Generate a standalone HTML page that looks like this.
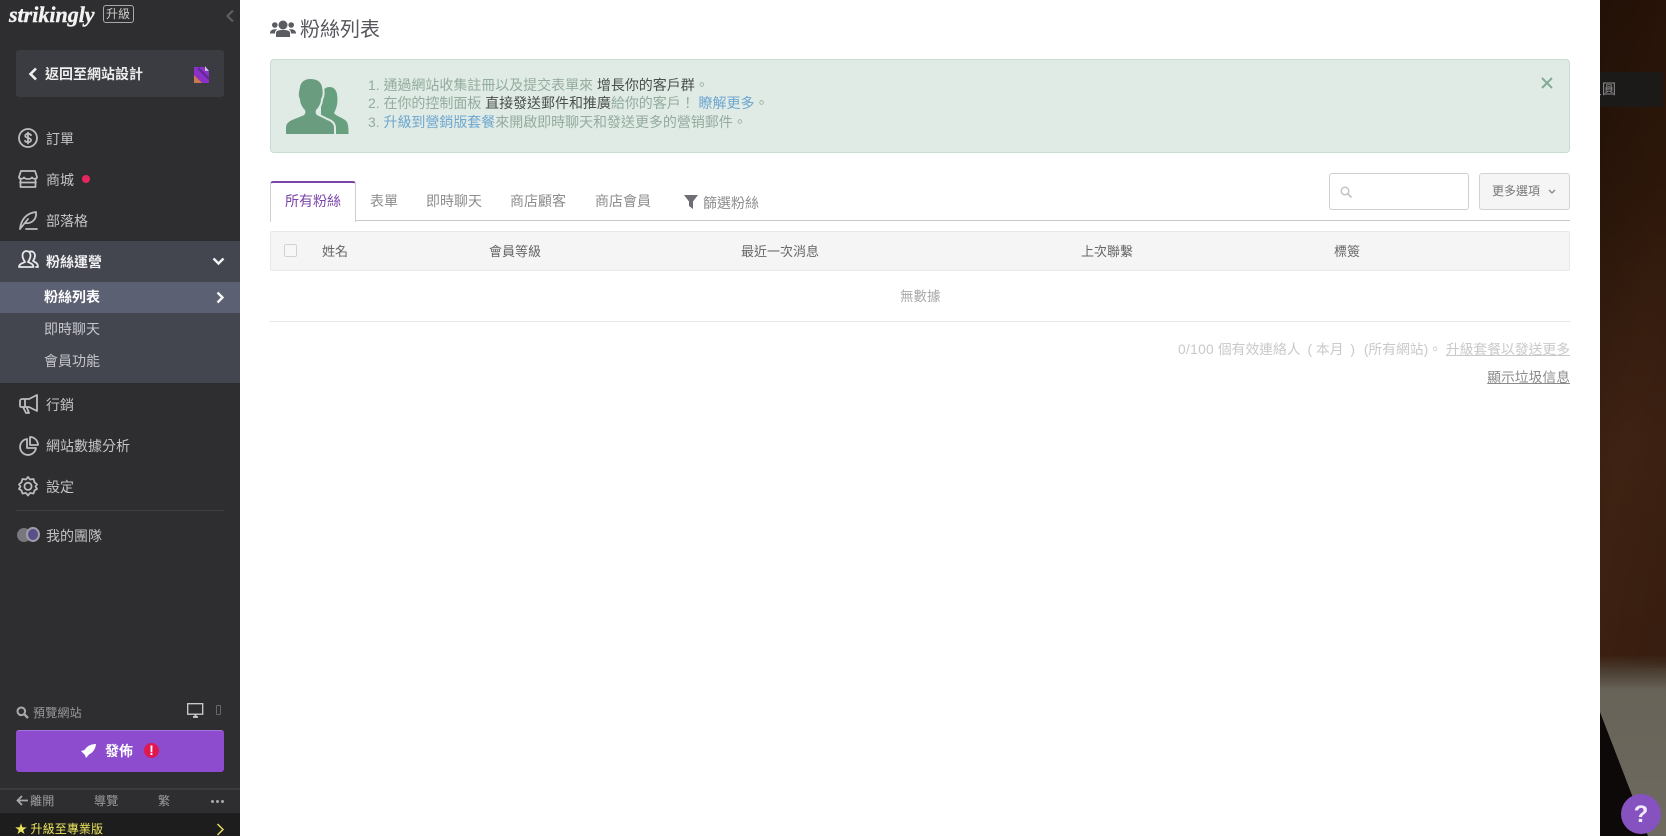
<!DOCTYPE html>
<html lang="zh-Hant"><head><meta charset="utf-8"><title>粉絲列表</title>
<style>
html,body{margin:0;padding:0;width:1666px;height:836px;overflow:hidden;background:#fff;font-family:"Liberation Sans","Noto Sans CJK TC",sans-serif}
*{box-sizing:border-box}
.a{position:absolute}
.t{position:absolute;white-space:nowrap;line-height:20px;font-size:14px}
svg{position:absolute;overflow:visible}
.n{color:#c4c4c8;left:46px}
.i{fill:none;stroke:#bdbdc1;stroke-width:1.8;stroke-linecap:round;stroke-linejoin:round}
.m{color:#8d8d8d}
.h{color:#666;font-size:13px;top:242px}
</style></head><body>

<!-- right background -->
<div class="a" style="left:1600px;top:0;width:66px;height:836px;overflow:hidden;background:linear-gradient(180deg,#2a1408 0,#2d170a 180px,#3e2213 440px,#3c2011 655px,#4c4034 672px,#686358 690px,#6e6a5f 836px)">
  <div class="a" style="left:0;top:0;width:66px;height:668px;background:linear-gradient(100deg,rgba(0,0,0,.18) 0,rgba(0,0,0,0) 55%,rgba(0,0,0,.08) 100%)"></div>
  <svg style="left:0;top:0" width="66" height="836"><path d="M0 712L30 790L48 836H0Z" fill="#0c0908"/></svg>
  <div class="a" style="left:0;top:72px;width:63px;height:35px;background:#1b1a19"></div>
  <div class="t" style="left:-12px;top:79px;font-size:14px;color:#8f8f8f">員圓</div>
  <div class="a" style="left:21px;top:794px;width:40px;height:40px;border-radius:50%;background:#8552c0"></div>
  <div class="t" style="left:21px;width:40px;text-align:center;top:803px;font-size:24px;font-weight:700;color:#f1eaf8;line-height:24px">?</div>
</div>

<!-- sidebar -->
<div class="a" style="left:0;top:0;width:240px;height:836px;background:#2e2e30"></div>
<div class="t" style="left:9px;top:3px;font:italic 700 22px/24px 'Liberation Serif',serif;color:#f2f2f2;letter-spacing:0;-webkit-text-stroke:.4px #f2f2f2">strikingly</div>
<div class="a" style="left:103px;top:5px;width:31px;height:18px;border:1px solid #a9a9ab;border-radius:3px"></div>
<div class="t" style="left:106px;top:4px;font-size:12px;color:#c8c8c8">升級</div>
<svg style="left:225px;top:9px" width="10" height="14"><path d="M8 1.5L2.5 7L8 12.5" fill="none" stroke="#5d5e61" stroke-width="2.2"/></svg>

<div class="a" style="left:16px;top:50px;width:208px;height:47px;background:#3b3c41;border-radius:3px"></div>
<svg style="left:28px;top:67px" width="10" height="14"><path d="M8 1.5L2.5 7L8 12.5" fill="none" stroke="#f0f0f0" stroke-width="2.6"/></svg>
<div class="t" style="left:45px;top:64px;color:#eee;font-weight:700">返回至網站設計</div>
<svg style="left:192px;top:65px" width="18" height="19"><path d="M2 2H12L17 6V18H2Z" fill="#8c30c8"/><path d="M2 18V10L10 18Z" fill="#c87a4a"/><path d="M6 3L17 14" stroke="#5a2a90" stroke-width="2"/><path d="M13 1V6H17" fill="#c9bde0"/></svg>

<!-- nav -->
<svg style="left:18px;top:128px" width="20" height="20" class="i"><circle cx="10" cy="10" r="9"/><path d="M13 7.2C12.4 6 11 5.8 10 5.8 8.4 5.800 7.200 6.600 7.200 7.900 7.200 10.600 13 9.300 13 12.100 13 13.400 11.700 14.200 10 14.200 8.800 14.200 7.500 13.900 7 12.800M10 4.500V15.500"/></svg>
<div class="t n" style="top:129px">訂單</div>
<svg style="left:18px;top:170px" width="20" height="18" class="i"><path d="M3 1H17L19 7C19 9 15.500 9.500 14 7.500 12.500 9.500 7.500 9.500 6 7.500 4.500 9.500 1 9 1 7ZM2.500 9V17H17.500V9M2 12.500H18"/></svg>
<div class="t n" style="top:170px">商城</div>
<div class="a" style="left:82px;top:175px;width:8px;height:8px;border-radius:50%;background:#e6265c"></div>
<svg style="left:19px;top:210px" width="20" height="20" class="i"><path d="M1 19C2 9 8 3 17 2 18 10 12 14 6 13M1 19L9 9M7 19H18"/></svg>
<div class="t n" style="top:211px">部落格</div>

<div class="a" style="left:0;top:241px;width:240px;height:142px;background:#43454f"></div>
<svg style="left:18px;top:250px" width="21" height="19" class="i" ><path d="M1 17C1 14 4 13.500 7 12 5 9 4.500 7 4.500 5.500 4.500 2.500 6.500 1 8.500 1 10.500 1 12.500 2.500 12.500 5.500 12.500 7 12 9 10 12 13 13.500 15.500 14 15.500 17ZM12 1.500C15 1 17 3 17 5.500 17 7.500 16 9.500 15 11 17.500 12.500 20 13 20 17H18" style="stroke:#e8e8ea"/></svg>
<div class="t" style="left:46px;top:252px;color:#f0f0f2;font-weight:700">粉絲運營</div>
<svg style="left:212px;top:257px" width="13" height="9"><path d="M1.500 1.500L6.500 6.500L11.500 1.500" fill="none" stroke="#f2f2f2" stroke-width="2.400"/></svg>
<div class="a" style="left:0;top:282px;width:240px;height:31px;background:#5c6073"></div>
<div class="t" style="left:44px;top:287px;color:#fff;font-weight:700">粉絲列表</div>
<svg style="left:216px;top:291px" width="9" height="13"><path d="M1.500 1.500L6.500 6.500L1.500 11.500" fill="none" stroke="#f5f5f5" stroke-width="2.400"/></svg>
<div class="t" style="left:44px;top:319px;color:#c6c6cc">即時聊天</div>
<div class="t" style="left:44px;top:351px;color:#c6c6cc">會員功能</div>

<svg style="left:19px;top:394px" width="20" height="20" class="i"><path d="M18 1V17L10 13H2C1 13 1 12 1 11V7C1 6 2 5 3 5H10ZM6 5V13M4 13L7 19H10L8 14"/></svg>
<div class="t n" style="top:395px">行銷</div>
<svg style="left:19px;top:436px" width="20" height="20" class="i"><path d="M8 3A8 8 0 1 0 17 12H8ZM11 1A8 8 0 0 1 19 9H11Z"/></svg>
<div class="t n" style="top:436px">網站數據分析</div>
<svg style="left:18px;top:476px" width="20" height="20" class="i"><path d="M10 1L12 3.500 15.500 3 16.500 6.200 19 8.500 17.500 10.500 19 13 16.500 14.500 15.500 17.500 12 17 10 19.500 8 17 4.500 17.500 3.500 14.500 1 13 2.500 10.500 1 8.500 3.500 6.200 4.500 3 8 3.500Z"/><circle cx="10" cy="10.300" r="3.600"/></svg>
<div class="t n" style="top:477px">設定</div>
<div class="a" style="left:16px;top:510px;width:208px;height:1px;background:#3f3f42"></div>
<div class="a" style="left:17px;top:528px;width:14px;height:14px;border-radius:50%;background:#77777c"></div>
<div class="a" style="left:26px;top:527px;width:14px;height:15px;border-radius:50%;background:#5a4f88;border:2px solid #9fa0aa"></div>
<div class="t n" style="top:526px">我的團隊</div>

<!-- bottom -->
<svg style="left:16px;top:706px" width="13" height="13"><circle cx="5.300" cy="5.300" r="3.800" fill="none" stroke="#a9a9ac" stroke-width="2"/><path d="M8.200 8.200L12 12" stroke="#a9a9ac" stroke-width="2.300"/></svg>
<div class="t" style="left:33px;top:703px;font-size:12px;color:#9a9a9d;letter-spacing:.2px">預覽網站</div>
<svg style="left:187px;top:703px" width="17" height="15"><rect x=".7" y=".7" width="15" height="10.500" fill="none" stroke="#d0d0d0" stroke-width="1.300"/><path d="M6 14H11M8.500 11V14" stroke="#d0d0d0" stroke-width="1.800"/></svg>
<div class="a" style="left:216px;top:705px;width:5px;height:10px;border:1px solid #66666a;border-radius:1px"></div>
<div class="a" style="left:16px;top:730px;width:208px;height:42px;background:#8d4bce;border-radius:3px;border-top:1px solid #a673dc"></div>
<svg style="left:80px;top:743px" width="17" height="16"><path d="M16 1C11 1 7 3 4.500 7L1 8 3 10 5 12 6 15 9 11.500C13 9.500 15.500 6 16 1Z" fill="#fff"/></svg>
<div class="t" style="left:105px;top:741px;color:#fff;font-weight:700">發佈</div>
<div class="a" style="left:144px;top:743px;width:15px;height:15px;border-radius:50%;background:#e0184f"></div>
<div class="t" style="left:144px;width:15px;text-align:center;top:740px;font-size:14px;font-weight:700;color:#fff">!</div>
<div class="a" style="left:0;top:788px;width:240px;height:2px;background:#3b3b3d"></div>
<svg style="left:16px;top:795px" width="12" height="11"><path d="M6 1L1.500 5.500L6 10M2 5.500H12" fill="none" stroke="#a7a7aa" stroke-width="1.800"/></svg>
<div class="t" style="left:30px;top:791px;font-size:12px;color:#9c9c9f;letter-spacing:.3px">離開</div>
<div class="t" style="left:94px;top:791px;font-size:12px;color:#9c9c9f;letter-spacing:.3px">導覽</div>
<div class="t" style="left:158px;top:791px;font-size:12px;color:#9c9c9f">繁</div>
<div class="a" style="left:211px;top:800px;width:3px;height:3px;border-radius:50%;background:#a8a8aa;box-shadow:5px 0 #a8a8aa,10px 0 #a8a8aa"></div>
<div class="a" style="left:0;top:813px;width:240px;height:23px;background:#1d1d1e"></div>
<div class="t" style="left:15px;top:819px;font-size:12px;color:#ece55c;letter-spacing:.1px">★ 升級至專業版</div>
<svg style="left:216px;top:823px" width="9" height="13"><path d="M1.500 1L7 6.500L1.500 12" fill="none" stroke="#e0d95a" stroke-width="1.500"/></svg>

<!-- main header -->
<svg style="left:270px;top:19px" width="26" height="19"><circle cx="13" cy="6" r="4.500" fill="#5b5c62"/><circle cx="4.800" cy="6" r="2.800" fill="#5b5c62"/><circle cx="21.200" cy="6" r="2.800" fill="#5b5c62"/><path d="M6 18V14C6 11.500 9 11 13 11S20 11.500 20 14V18Z" fill="#5b5c62"/><path d="M0 14.500C0 10.500 4 9.800 7.200 10.500 5.500 11.500 5 12.500 5 14.500ZM26 14.500C26 10.500 22 9.800 18.800 10.500 20.500 11.500 21 12.500 21 14.500Z" fill="#5b5c62"/></svg>
<div class="t" style="left:300px;top:18px;font-size:20px;line-height:24px;color:#55565c">粉絲列表</div>

<!-- alert -->
<div class="a" style="left:270px;top:59px;width:1300px;height:94px;background:#e0ebe5;border:1px solid #c8dcd0;border-radius:4px"></div>
<svg style="left:285px;top:78px" width="64" height="57"><path d="M36 56V28C36 20 36 9 44.500 9 53 9 53 20 52 27 51 31 50 33 49 35 51 38 56 39 60 42 63 44 63.500 48 63.500 56Z" fill="#67a07e"/><path d="M1 56V50C1 46 3 44 7 42L17 38C20 37 21 35 20 32 17 29 15 25 15 21 13 18 14 14 15 9 16 3 21 1 25 1 31 1 36 3 37 9 38 14 38 18 36 21 36 25 34 29 31 32 30 35 31 37 34 38L42 42C47 44 49 46 49 50V56Z" fill="#6a9c80" stroke="#e0ebe5" stroke-width="4" paint-order="stroke"/></svg>
<div style="position:absolute;left:368px;top:76px;font-size:14px;line-height:18.300px;color:#93ac9f;white-space:pre;letter-spacing:-.03px">1. 通過網站收集註冊以及提交表單來 <span style="color:#4a4f4c">增長你的客戶群</span>。
2. 在你的控制面板 <span style="color:#4a4f4c">直接發送郵件和推廣</span>給你的客戶！ <span style="color:#6ea7cf">瞭解更多</span>。
3. <span style="color:#6ea7cf">升級到營銷版套餐</span>來開啟即時聊天和發送更多的營销郵件。</div>
<svg style="left:1541px;top:77px" width="12" height="12"><path d="M1 1L11 11M11 1L1 11" stroke="#86ab98" stroke-width="2"/></svg>

<!-- tabs -->
<div class="a" style="left:270px;top:220px;width:1300px;height:1px;background:#c9c9c9"></div>
<div class="a" style="left:270px;top:181px;width:86px;height:41px;background:#fff;border:1px solid #cfcfcf;border-top:2px solid #7a44a8;border-bottom:0;border-radius:3px 3px 0 0"></div>
<div class="t" style="left:285px;top:191px;color:#7b45aa">所有粉絲</div>
<div class="t m" style="left:370px;top:191px">表單</div>
<div class="t m" style="left:426px;top:191px">即時聊天</div>
<div class="t m" style="left:510px;top:191px">商店顧客</div>
<div class="t m" style="left:595px;top:191px">商店會員</div>
<svg style="left:684px;top:195px" width="14" height="14"><path d="M0 0H14L9 6.500V14L5 11V6.500Z" fill="#6e6f74"/></svg>
<div class="t m" style="left:703px;top:193px">篩選粉絲</div>

<div class="a" style="left:1329px;top:173px;width:140px;height:37px;border:1px solid #cfcfcf;border-radius:3px;background:#fff"></div>
<svg style="left:1340px;top:186px" width="12" height="12"><circle cx="5" cy="5" r="3.800" fill="none" stroke="#c4c4c4" stroke-width="1.500"/><path d="M8 8L11.500 11.500" stroke="#c4c4c4" stroke-width="1.800"/></svg>
<div class="a" style="left:1479px;top:173px;width:91px;height:37px;border:1px solid #d2d2d2;border-radius:3px;background:#f5f5f5"></div>
<div class="t" style="left:1492px;top:181px;font-size:12px;color:#777">更多選項</div>
<svg style="left:1548px;top:189px" width="8" height="6"><path d="M1 1L4 4L7 1" fill="none" stroke="#888" stroke-width="1.300"/></svg>

<!-- table -->
<div class="a" style="left:270px;top:231px;width:1300px;height:40px;background:#f5f5f5;border:1px solid #e8e8e8;border-radius:2px"></div>
<div class="a" style="left:284px;top:244px;width:13px;height:13px;border:1px solid #d2d2d2;border-radius:2px;background:#f7f7f7"></div>
<div class="t h" style="left:322px">姓名</div>
<div class="t h" style="left:489px">會員等級</div>
<div class="t h" style="left:741px">最近一次消息</div>
<div class="t h" style="left:1081px">上次聯繫</div>
<div class="t h" style="left:1334px">標簽</div>
<div class="t" style="left:900px;top:287px;font-size:13.500px;color:#a9a9a9">無數據</div>
<div class="a" style="left:270px;top:321px;width:1300px;height:1px;background:#e6e6e6"></div>
<div class="t" style="right:96px;top:340px;color:#c9c9c9;font-size:13.800px;white-space:pre"><span style="letter-spacing:.3px">0/100</span> 個有效連絡人<span style="margin-left:3px"> </span>( 本月<span style="margin-left:3px"> </span>)<span style="margin-left:5px"> </span>(所有網站)。 <span style="text-decoration:underline">升級套餐以發送更多</span></div>
<div class="t" style="right:96px;top:368px;color:#8b8b8b;text-decoration:underline;font-size:13.800px">顯示垃圾信息</div>
</body></html>
